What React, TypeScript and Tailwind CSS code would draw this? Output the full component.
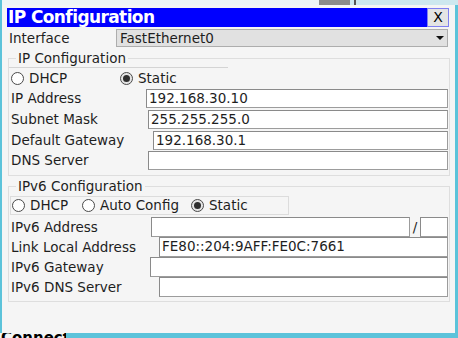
import React from 'react';

const inputBox = 'bg-white border border-[#9c9c9c] border-t-[#8a8a8a] border-l-[#8a8a8a] pl-[2px] leading-[17px] whitespace-nowrap overflow-hidden';

const Radio = ({ checked }: { checked?: boolean }) => (
  <span
    className={`w-[13px] h-[13px] shrink-0 rounded-full border border-[#4a4a4a] flex items-center justify-center ${
      checked ? 'bg-[#e4e4e4]' : 'bg-white'
    }`}
  >
    {checked && <span className="w-[7px] h-[7px] rounded-full bg-[#2e2e2e]" />}
  </span>
);

const Row = ({
  label,
  labelW,
  rowH,
  value,
  children,
}: {
  label: string;
  labelW: string;
  rowH: string;
  value?: string;
  children?: React.ReactNode;
}) => (
  <div className={`flex items-center pl-[2px] pr-[1px] ${rowH}`}>
    <span className={`${labelW} shrink-0`}>{label}</span>
    {children ?? <div className={`flex-1 h-[19px] ${inputBox}`}>{value}</div>}
  </div>
);

const ipv4 = [
  { label: 'IP Address', labelW: 'w-[135px]', rowH: 'h-[21px]', value: '192.168.30.10' },
  { label: 'Subnet Mask', labelW: 'w-[137px]', rowH: 'h-[21px]', value: '255.255.255.0' },
  { label: 'Default Gateway', labelW: 'w-[142px]', rowH: 'h-[20px]', value: '192.168.30.1' },
  { label: 'DNS Server', labelW: 'w-[137px]', rowH: 'h-[20px]', value: '' },
];

const ipv6 = [
  { label: 'Link Local Address', labelW: 'w-[148px]', value: 'FE80::204:9AFF:FE0C:7661' },
  { label: 'IPv6 Gateway', labelW: 'w-[139px]', value: '' },
  { label: 'IPv6 DNS Server', labelW: 'w-[148px]', value: '' },
];

export default function App() {
  return (
    <div className="w-[458px] h-[338px] overflow-hidden flex flex-col bg-[#5cc3da] font-['DejaVu_Sans',sans-serif] text-[13.5px] text-[#1e1e1e]">
      {/* desktop behind the dialog */}
      <div className="h-[5px] shrink-0 flex bg-[#cde8ef]">
        <div className="w-[2px] bg-[#5cc3da]" />
        <div className="w-[317px] bg-[#eef5f7]" />
        <div className="w-[31px] bg-[#8b8b8b]" />
        <div className="w-[4px]" />
        <div className="w-[2px] bg-[#555]" />
      </div>

      <div className="flex-1 flex min-h-0">
        <div className="w-[2px] shrink-0 bg-[#5cc3da]" />
        <div className="flex-1 bg-[#f5f5f5] pt-[3px] pl-[5px] pr-[5px] flex flex-col">
          {/* title bar */}
          <div className="flex h-[19px] mr-[1px] shrink-0">
            <div className="flex-1 bg-[#0000ff] text-white font-bold text-[17px] leading-[19px] tracking-[-0.6px] pl-[1px]">
              IP Configuration
            </div>
            <div className="w-[22px] bg-[#e4e4e4] border border-[#8080f0] flex items-center justify-center text-[14px] text-black">
              X
            </div>
          </div>

          {/* interface */}
          <div className="flex items-center h-[20px] mt-[1px] shrink-0">
            <span className="w-[109px] pl-[2px]">Interface</span>
            <div className="w-[332px] h-[18px] bg-[#e1e1e1] border border-[#adadad] flex items-center pl-[3px] pr-[3px]">
              <span className="flex-1">FastEthernet0</span>
              <svg width="8" height="5" viewBox="0 0 8 5">
                <path d="M0 0 L8 0 L4 4 Z" fill="#111" />
              </svg>
            </div>
          </div>

          {/* IPv4 */}
          <fieldset className="ml-[1px] mt-[3px] border border-[#dedede] pb-[5px] shrink-0">
            <legend className="ml-[7px] px-[2px] leading-[14px]">IP Configuration</legend>
            <div className="flex items-center h-[21px] w-[219px] mt-[2px] border-t border-[#d4d4d4] pl-[2px] gap-[5px]">
              <Radio />
              <span className="w-[86px]">DHCP</span>
              <Radio checked />
              <span>Static</span>
            </div>
            {ipv4.map((r) => (
              <Row key={r.label} {...r} />
            ))}
          </fieldset>

          {/* IPv6 */}
          <fieldset className="ml-[1px] mt-[3px] border border-[#dedede] pb-[4px] shrink-0">
            <legend className="ml-[7px] px-[2px] leading-[14px]">IPv6 Configuration</legend>
            <div className="flex items-center h-[19px] w-[279px] ml-[1px] mt-[3px] border border-[#dcdcdc] pl-[1px] gap-[5px]">
              <Radio />
              <span className="w-[47px]">DHCP</span>
              <Radio />
              <span className="w-[86px]">Auto Config</span>
              <Radio checked />
              <span>Static</span>
            </div>
            <div className="mt-[2px]">
              <Row label="IPv6 Address" labelW="w-[140px]" rowH="h-[20px]">
                <div className={`w-[259px] h-[20px] ${inputBox}`} />
                <span className="w-[10px] text-center">/</span>
                <div className={`flex-1 h-[20px] ${inputBox}`} />
              </Row>
              {ipv6.map((r) => (
                <Row key={r.label} {...r} rowH="h-[20px]">
                  <div className={`flex-1 h-[20px] ${inputBox}`}>{r.value}</div>
                </Row>
              ))}
            </div>
          </fieldset>
        </div>
        <div className="w-[3px] shrink-0 bg-[#5cc3da]" />
      </div>

      {/* edge of the canvas below */}
      <div className="h-[5px] shrink-0 flex overflow-hidden">
        <div className="w-[66px] bg-[#f3f6f7] overflow-hidden">
          <div className="font-bold text-[15px] leading-[10px] text-black pl-[1px]">Connector</div>
        </div>
        <div className="flex-1 bg-[#5cc3da]" />
      </div>
    </div>
  );
}
